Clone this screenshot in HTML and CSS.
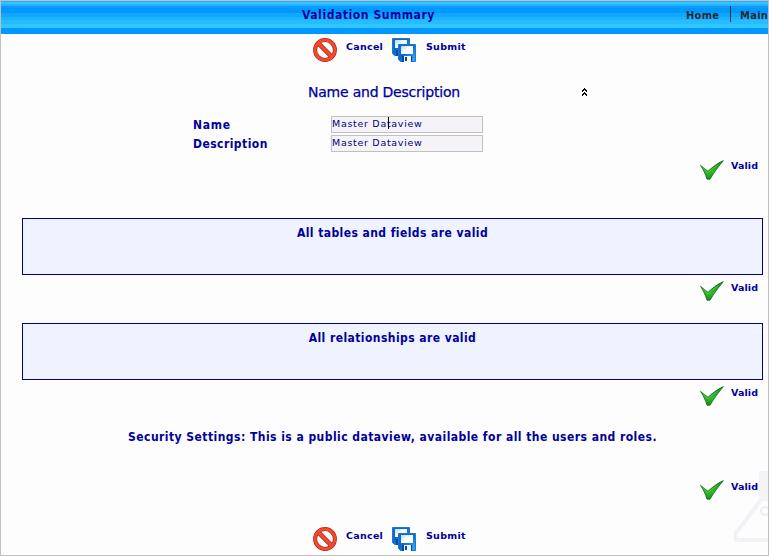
FILE: index.html
```html
<!DOCTYPE html>
<html lang="en">
<head>
<meta charset="utf-8">
<title>Validation Summary</title>
<link rel="stylesheet" href="styles.css">
</head>
<body>
<svg class="defs" width="0" height="0" aria-hidden="true">
  <defs>
    <linearGradient id="green" x1="0" y1="0" x2="0" y2="1"><stop offset="0" stop-color="#178a17"/><stop offset=".6" stop-color="#31bd26"/><stop offset="1" stop-color="#139013"/></linearGradient>
    <linearGradient id="blue" x1="0" y1="0" x2="1" y2="1"><stop offset="0" stop-color="#1767c8"/><stop offset=".45" stop-color="#0b6ad0"/><stop offset="1" stop-color="#35b4f8"/></linearGradient>
    <linearGradient id="label" x1="0" y1="0" x2="1" y2="1"><stop offset="0" stop-color="#a8dcff"/><stop offset=".5" stop-color="#fff"/></linearGradient>
    <symbol id="cancel" viewBox="0 0 24 24">
      <circle cx="12" cy="12" r="9.9" fill="none" stroke="#a52b19" stroke-width="4"/>
      <path d="M5.2 5.2 18.8 18.8" stroke="#a52b19" stroke-width="4.6"/>
      <circle cx="12" cy="12" r="9.9" fill="none" stroke="#f5482c" stroke-width="2.6"/>
      <path d="M5 5 19 19" stroke="#f5482c" stroke-width="3"/>
    </symbol>
    <symbol id="disk" viewBox="0 0 18 18">
      <path d="M.5.5h17v17H2.500l-2-2z" fill="url(#blue)" stroke="#1c78d2"/>
      <path d="M3 2h12v8H3z" fill="url(#label)"/>
      <path d="M4 12h10v6H4z" fill="#084a9c"/><path d="M6 12h7v6H6z" fill="#f4f8fc"/><path d="M7 13h2v4H7z" fill="#084a9c"/>
    </symbol>
    <symbol id="save" viewBox="0 0 24 24">
      <use href="#disk" x="0" y="0" width="18" height="18"/>
      <use href="#disk" x="6" y="6" width="18" height="18"/>
    </symbol>
    <symbol id="check" viewBox="0 0 24 20">
      <path d="M.6 5.400C3 7.500 5.500 9.500 8 11.300 12 7.500 17 3.500 23.400.6 18.500 6.500 13.500 13 10 19.200H7C5.500 14 3.500 10 .6 5.400z" fill="url(#green)" stroke="#12651a" stroke-width=".8"/>
      <path d="M3 8.500 8 12.800Q12 9 18 5" fill="none" stroke="#6cd063" stroke-width=".6"/>
    </symbol>
  </defs>
</svg>
<div class="page">
  <header class="header">
    <h1 class="title">Validation Summary</h1>
    <nav class="nav"><a class="link">Home</a><a class="link main">Main</a></nav>
  </header>

  <div class="toolbar">
    <svg class="icon"><use href="#cancel"/></svg><span class="action cancel">Cancel</span>
    <svg class="icon"><use href="#save"/></svg><span class="action">Submit</span>
  </div>

  <div class="section-head">
    <h2 class="section-title">Name and Description</h2>
    <svg class="collapse" viewBox="0 0 5 8" shape-rendering="crispEdges"><path d="M2 0h1v1h1v1h1v2H4V3H3V2H2v1H1v1H0V2h1V1h1zM2 4h1v1h1v1h1v2H4V7H3V6H2v1H1v1H0V6h1V5h1z"/></svg>
  </div>

  <div class="fields">
    <span class="label name">Name</span><div class="field"><span class="value">Master Dataview</span><i class="caret"></i></div>
    <span class="label desc">Description</span><div class="field"><span class="value">Master Dataview</span></div>
  </div>

  <div class="status top"><svg class="check"><use href="#check"/></svg><span class="valid">Valid</span></div>
  <div class="panel first"><span class="message">All tables and fields are valid</span></div>
  <div class="status after"><svg class="check"><use href="#check"/></svg><span class="valid">Valid</span></div>
  <div class="panel second"><span class="message">All relationships are valid</span></div>
  <div class="status after"><svg class="check"><use href="#check"/></svg><span class="valid">Valid</span></div>
  <div class="security"><span class="message wide">Security Settings: This is a public dataview, available for all the users and roles.</span></div>
  <div class="status last"><svg class="check"><use href="#check"/></svg><span class="valid">Valid</span></div>

  <div class="toolbar bottom">
    <svg class="icon"><use href="#cancel"/></svg><span class="action cancel">Cancel</span>
    <svg class="icon"><use href="#save"/></svg><span class="action">Submit</span>
  </div>
  <svg class="watermark" viewBox="0 0 34 72"><path d="M34 2H27V29L2 62Q-1 69 5 69H34" fill="none" stroke="#f3f1f5" stroke-width="4"/><path d="M34 0H25V30H34z" fill="#f5f3f7"/><circle cx="31" cy="40" r="4" fill="none" stroke="#f0eef3" stroke-width="2"/></svg>
</div>
</body>
</html>
```
FILE: styles.css
```css
* { box-sizing: border-box; }
body { margin: 0; background: #fdfdfd; color: #00009c; font: bold 12px "DejaVu Sans Condensed", "DejaVu Sans", sans-serif; font-stretch: condensed; }
.defs { position: absolute; }
.page { position: relative; width: 769px; height: 556px; border: 1px solid #c0c0c0; overflow: hidden; display: flex; flex-direction: column; }
.header { height: 33px; flex: none; display: flex; background: linear-gradient(#23adff 0 1px, #35c3ff 1px 3px, #26b2ff 3px 5px, #0b9cff 5px 7px, #0098ff 7px 12px, #10a8ff 12px 16px, #1ab4ff 16px 19px, #26bcff 19px 23px, #30c7ff 23px 27px, #0098ff 27px); }
.title { width: 684px; flex: none; margin: 0; padding-left: 301px; font-size: 12px; line-height: 28px; letter-spacing: .57px; white-space: nowrap; }
.nav { display: flex; flex: none; color: #222a33; line-height: 29px; font-size: 11px; letter-spacing: .3px; }
.link { width: 45px; padding-left: 1px; }
.main { height: 16px; margin-top: 5px; line-height: 19px; border-left: 1px solid #222a33; padding-left: 9px; }
.toolbar { height: 24px; flex: none; margin: 4px 0 0 312px; display: flex; }
.icon { width: 24px; height: 24px; flex: none; }
.action { margin-left: 10px; font: bold 9.5px/17px "DejaVu Sans", sans-serif; font-stretch: normal; letter-spacing: .28px; }
.cancel { width: 46px; margin-left: 9px; }
.section-head { display: flex; height: 24px; margin: 18px 0 0 307px; }
.section-title { margin: 0; width: 274px; font: normal 14px/25px "DejaVu Sans", sans-serif; letter-spacing: -.22px; -webkit-text-stroke: .25px; white-space: nowrap; }
.collapse { width: 5px; height: 8px; margin-top: 8px; fill: #000; }
.fields { display: grid; grid-template-columns: 138px 152px; grid-auto-rows: 17px; row-gap: 2px; margin: 12px 0 0 192px; }
.label { line-height: 18px; letter-spacing: .45px; }
.name { letter-spacing: .75px; }
.field { position: relative; border: 1px solid #c0c0c0; background: #f5f3f7; font: normal 9.5px/14px "DejaVu Sans", sans-serif; letter-spacing: .7px; color: #000080; }
.caret { position: absolute; left: 56px; top: 0; width: 1px; height: 12px; background: #000; }
.status { display: flex; height: 20px; flex: none; margin: 8px 0 0 699px; }
.check { width: 24px; height: 20px; flex: none; }
.valid { margin-left: 7px; font: bold 9.5px/13px "DejaVu Sans", sans-serif; font-stretch: normal; letter-spacing: .1px; }
.top .valid { line-height: 11px; }
.panel { width: 741px; height: 57px; flex: none; margin-left: 21px; border: 1px solid #00008c; background: #eef3ff; text-align: center; }
.message { display: block; line-height: 28px; white-space: nowrap; letter-spacing: .43px; }
.wide { letter-spacing: .46px; }
.first { margin-top: 38px; }
.second { margin-top: 22px; }
.after { margin-top: 6px; }
.security { height: 26px; margin: 17px 0 0 127px; }
.last { margin-top: 31px; }
.bottom { margin-top: 27px; }
.watermark { position: absolute; right: 0; bottom: 12px; width: 34px; height: 72px; z-index: -1; }
```
